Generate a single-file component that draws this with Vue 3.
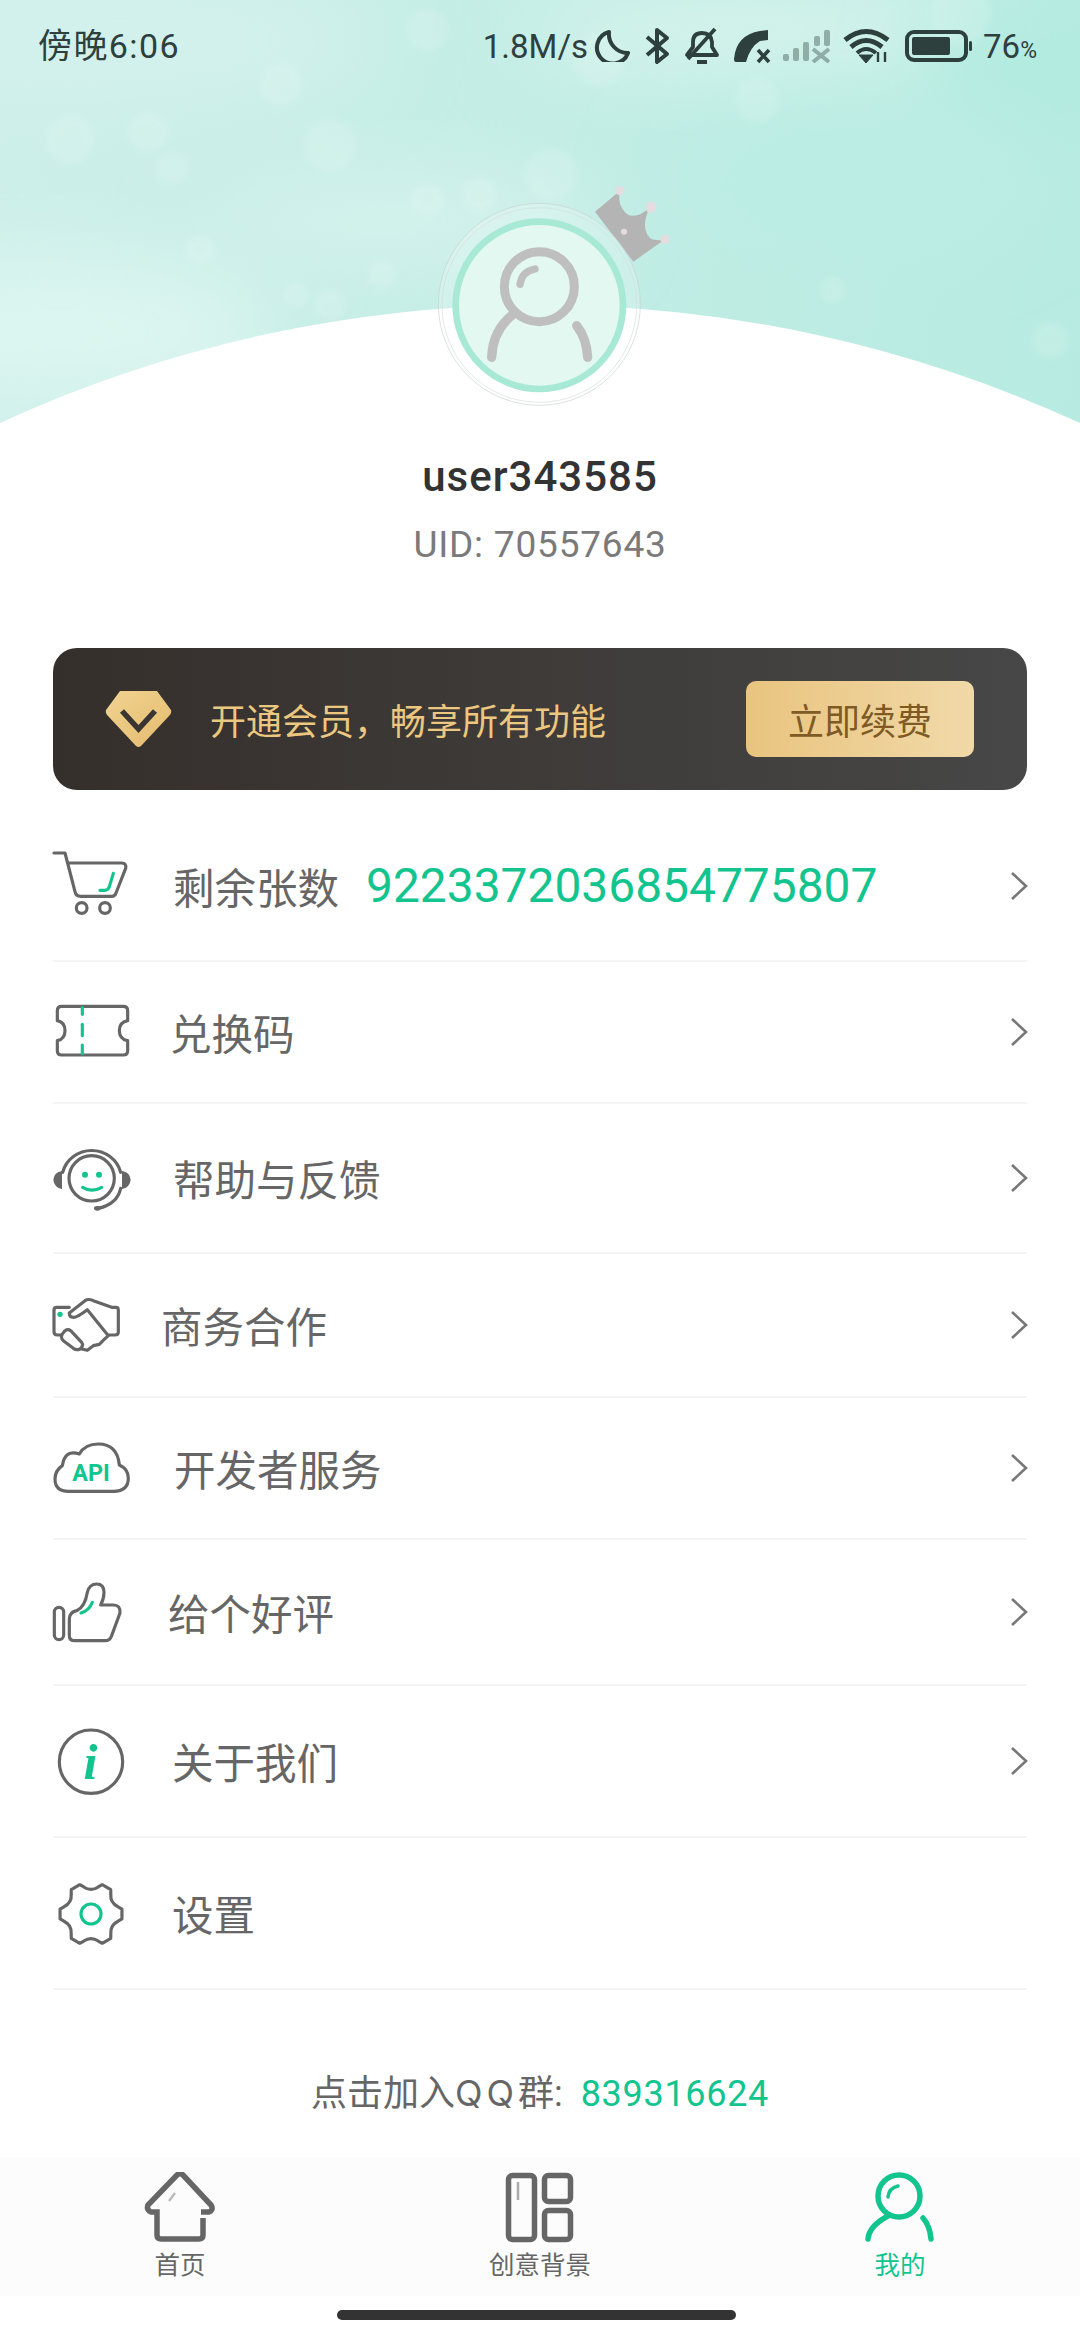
<script setup>
// gear outline, six teeth, in the same units as the other menu icons
function gearPath(cx, cy) {
  let d = ''
  for (let k = 0; k < 6; k++) {
    const a = (k * Math.PI) / 3
    const pt = (r, off) => {
      const t = a + (off * Math.PI) / 180
      return (cx + r * Math.cos(t)).toFixed(1) + ' ' + (cy + r * Math.sin(t)).toFixed(1)
    }
    d += (k === 0 ? 'M' : 'L') + pt(94, -9) + ' L' + pt(94, 9) + ' L' + pt(84, 15) + ' Q' + pt(66, 30) + ' ' + pt(84, 45) + ' L' + pt(94, 51) + ' '
  }
  return d + 'Z'
}

const bokeh = [
  [427, 30, 21], [281, 85, 21], [172, 168, 17], [148, 132, 20], [480, 194, 17], [427, 200, 16],
  [330, 145, 26], [551, 175, 26], [757, 100, 22], [1050, 340, 18], [960, 15, 30], [382, 275, 14],
  [833, 290, 13], [330, 305, 16], [296, 295, 12], [70, 140, 24], [600, 60, 26], [200, 250, 14]
]

const menu = [
  {
    name: '剩余张数', value: '9223372036854775807', height: 150, slot: 120, view: '69 51 240 180', arrow: true,
    gray: ['M72 42H105L135 158Q138 172 152 172H245Q255 172 258 162L287 88Q290 72 275 72H113', 'M139 207a16 16 0 1 0 32 0a16 16 0 1 0 -32 0', 'M209 207a16 16 0 1 0 32 0a16 16 0 1 0 -32 0'],
    green: ['M250 103L238 143Q235 154 224 154H210']
  },
  {
    name: '兑换码', height: 142, slot: 117, view: '69 489 240 180', arrow: true,
    gray: ['M95 502H280Q293 502 293 515V545Q268 550 268 575Q268 600 293 605V635Q293 648 280 648H95Q82 648 82 635V605Q105 600 105 575Q105 550 82 545V515Q82 502 95 502Z'],
    green: ['M157 506V526', 'M157 556V590', 'M157 618V644']
  },
  {
    name: '帮助与反馈', height: 150, slot: 120, view: '69 927 240 180', arrow: true,
    gray: ['M117 1018a68 68 0 1 0 136 0a68 68 0 1 0 -136 0', 'M98 1000A90 88 0 0 1 272 1000', 'M272 1048Q262 1095 205 1108'],
    fill: ['M96 996V1050Q72 1045 70 1022Q72 1000 96 996Z', 'M276 996V1050Q300 1045 302 1022Q300 1000 276 996Z', 'M192 1108a10 7 0 1 0 20 0a10 7 0 1 0 -20 0Z'],
    green: ['M158 1045Q185 1062 215 1045'],
    dots: [[165, 1007, 9], [207, 1007, 9]]
  },
  {
    name: '商务合作', height: 144, slot: 108, view: '69 168 240 180', arrow: true,
    gray: ['M118 205H80Q72 205 72 213V278Q72 287 82 288H92', 'M118 222Q118 235 130 235Q142 235 172 212L235 290L222 302L208 316L190 320L172 334L155 330', 'M118 222L165 185Q175 178 190 185L245 205H258Q265 205 265 213V280Q265 288 255 288H235', 'M97 285Q110 265 122 275L155 310Q162 320 150 330Q140 335 130 328L100 305Q90 295 97 285Z'],
    green: [],
    dots: [[90, 226, 8]]
  },
  {
    name: '开发者服务', height: 142, slot: 121, view: '69 597 240 180', arrow: true,
    gray: ['M115 757H250Q295 757 295 717Q295 690 268 678Q262 615 205 615Q165 615 148 645Q105 630 97 680Q75 695 75 720Q75 757 115 757Z'],
    green: [],
    label: { text: 'API', x: 183, y: 726, size: 70, family: 'Roboto', style: 'normal' }
  },
  {
    name: '给个好评', height: 146, slot: 115, view: '69 1029 240 180', arrow: true,
    gray: ['M87 1105a14 14 0 0 1 14 14V1188a14 14 0 0 1 -28 0V1119a14 14 0 0 1 14 -14Z', 'M118 1140Q118 1120 140 1115Q165 1105 172 1060Q178 1035 200 1035Q222 1035 222 1060Q222 1080 212 1098H250Q272 1098 270 1122L245 1190Q240 1205 225 1205H135Q118 1205 118 1190Z'],
    green: ['M153 1122Q178 1115 187 1090']
  },
  {
    name: '关于我们', height: 152, slot: 119, view: '69 96 240 180', arrow: true,
    gray: ['M88 188a95 95 0 1 0 190 0a95 95 0 1 0 -190 0'],
    green: [],
    label: { text: 'i', x: 181, y: 241, size: 150, family: 'Liberation Serif', style: 'italic' }
  },
  {
    name: '设置', height: 152, slot: 119, view: '69 552 240 180', arrow: false,
    gray: [gearPath(183, 645)],
    green: ['M153 645a30 30 0 1 0 60 0a30 30 0 1 0 -60 0']
  }
]

const tabs = [
  { name: '首页' },
  { name: '创意背景' },
  { name: '我的', active: true }
]
</script>

<template>
  <div class="page">
    <div class="hero">
      <svg class="hero-bg" viewBox="0 0 1080 424" preserveAspectRatio="none">
        <defs>
          <filter id="soft" x="-50%" y="-50%" width="200%" height="200%">
            <feGaussianBlur stdDeviation="40" />
          </filter>
          <filter id="dot" x="-30%" y="-30%" width="160%" height="160%">
            <feGaussianBlur stdDeviation="3" />
          </filter>
        </defs>
        <ellipse cx="120" cy="40" rx="260" ry="70" fill="#d3f1ec" filter="url(#soft)" />
        <ellipse cx="760" cy="30" rx="240" ry="50" fill="#d4f3ec" filter="url(#soft)" />
        <ellipse cx="60" cy="330" rx="220" ry="80" fill="#dcf5f0" filter="url(#soft)" />
        <ellipse cx="400" cy="220" rx="200" ry="50" fill="#d4f2ec" filter="url(#soft)" />
        <ellipse cx="1040" cy="70" rx="120" ry="60" fill="#b2ebe0" filter="url(#soft)" />
        <ellipse cx="850" cy="180" rx="190" ry="70" fill="#bcede4" filter="url(#soft)" />
        <circle v-for="(b, i) in bokeh" :key="i" :cx="b[0]" :cy="b[1]" :r="b[2]" fill="#fff" opacity="0.13" filter="url(#dot)" />
        <path d="M0 423A1294 1294 0 0 1 1080 423V424H0Z" fill="#fff" />
      </svg>

      <div class="status">
        <span class="clock">傍晚6:06</span>
        <div class="status-right">
          <span class="speed">1.8M/s</span>
          <svg class="moon" width="36" height="32" viewBox="0 0 36 32" fill="none" stroke="#2e403e" stroke-width="4" stroke-linejoin="round">
            <path d="M15 2A16 16 0 1 0 34 23A19 19 0 0 1 15 2Z" />
          </svg>
          <svg class="blue" width="26" height="38" viewBox="0 0 26 38" fill="none" stroke="#2e403e" stroke-width="4" stroke-linejoin="round">
            <path d="M3 10L23 27L13 35V3L23 11L3 28" />
          </svg>
          <svg class="bell" width="36" height="38" viewBox="0 0 36 38" fill="none" stroke="#2e403e" stroke-width="3.8" stroke-linejoin="round">
            <path d="M3 28H33L28 20V15Q27 6 18 6Q9 6 9 15V20Z" />
            <path d="M4 32L31 2" />
            <path d="M13 35H23" stroke-width="4" />
          </svg>
          <svg class="phone" width="38" height="36" viewBox="0 0 38 36" fill="none">
            <path d="M35 2V12L27 13Q17 19 13 34H3Q1 34 1 31Q3 7 27 3Z" fill="#2e403e" />
            <path d="M25 22L36 34M36 22L25 34" stroke="#2e403e" stroke-width="3.600" />
          </svg>
          <svg class="signal" width="50" height="34" viewBox="0 0 50 34" fill="#2e403e" opacity="0.38">
            <rect x="1" y="25" width="6" height="7" rx="2" />
            <rect x="11" y="19" width="6" height="13" rx="2" />
            <rect x="21" y="13" width="6" height="19" rx="2" />
            <rect x="32" y="7" width="6" height="10" rx="2" />
            <rect x="42" y="1" width="6" height="16" rx="2" />
            <path d="M31 20L47 33M47 20L31 33" stroke="#2e403e" stroke-width="4" fill="none" />
          </svg>
          <svg class="wifi" width="48" height="36" viewBox="0 0 48 36" fill="none" stroke="#2e403e" stroke-width="5">
            <path d="M2 12Q23 -5 45 12" />
            <path d="M8 19Q23 6 39 19" />
            <path d="M14 25Q23 17 33 25" stroke-width="4" />
            <path d="M16 27L23 35L30 27Z" fill="#2e403e" stroke-width="1" />
            <path d="M35 24V34M42 24V34" stroke-width="2.400" />
          </svg>
          <svg class="battery" width="68" height="32" viewBox="0 0 68 32" fill="none">
            <rect x="2" y="2" width="59" height="28" rx="7" stroke="#2e403e" stroke-width="4" />
            <rect x="7" y="7" width="38" height="18" rx="2" fill="#2e403e" />
            <rect x="64" y="11" width="3" height="10" rx="1.5" fill="#2e403e" />
          </svg>
          <span class="percent">76<small>%</small></span>
        </div>
      </div>

      <svg class="avatar" width="240" height="240" viewBox="0 0 720 720">
        <path d="M525 125L600 62Q590 110 625 135Q655 145 690 112Q660 170 690 205Q710 215 735 208L640 275Z" fill="#b4b4b4" />
        <circle cx="600" cy="62" r="14" fill="#e4dde0" />
        <circle cx="693" cy="112" r="17" fill="#e4dde0" />
        <circle cx="735" cy="208" r="14" fill="#e4dde0" />
        <circle cx="612" cy="185" r="9" fill="#e4dde0" />
        <circle cx="358" cy="403" r="303" fill="#fff" fill-opacity="0.2" stroke="#c9d2d0" stroke-width="2" />
        <circle cx="358" cy="405" r="292" fill="none" stroke="#d8dddc" stroke-width="2" />
        <circle cx="358" cy="406" r="251" fill="#e2f8f1" stroke="#a8e9d6" stroke-width="20" />
        <g fill="none" stroke="#bfbfbf" stroke-linecap="round">
          <circle cx="358" cy="350" r="105" stroke-width="27" />
          <path d="M300 343Q305 305 345 297" stroke-width="22" />
          <path d="M215 562Q218 480 280 432" stroke-width="28" />
          <path d="M470 467Q500 505 503 562" stroke-width="28" />
        </g>
      </svg>
    </div>

    <div class="name">user343585</div>
    <div class="uid">UID: 70557643</div>

    <div class="vip">
      <div class="vip-left">
        <svg width="67" height="58" viewBox="0 0 67 58">
          <defs>
            <linearGradient id="gold" x1="0" y1="0" x2="1" y2="1">
              <stop offset="0" stop-color="#f0d391" />
              <stop offset="1" stop-color="#e5bb6e" />
            </linearGradient>
          </defs>
          <path d="M15 1H52L66 20Q67 23 64 26L36 56Q33.500 58 31 56L3 26Q0 23 1 20Z" fill="url(#gold)" />
          <path d="M17 21L33.500 39L50 21" fill="none" stroke="#3a3532" stroke-width="5.500" />
        </svg>
        <span>开通会员，畅享所有功能</span>
      </div>
      <div class="vip-btn">立即续费</div>
    </div>

    <div class="menu">
      <div v-for="item in menu" :key="item.name" class="row" :style="{ height: item.height + 'px' }">
        <div class="row-icon" :style="{ width: item.slot + 'px' }">
          <svg width="80" height="60" :viewBox="item.view">
            <path v-for="d in item.gray" :key="d" :d="d" class="ic-gray" />
            <path v-for="d in item.fill" :key="d" :d="d" fill="#666" />
            <path v-for="d in item.green" :key="d" :d="d" class="ic-green" />
            <circle v-for="c in item.dots" :key="c[0]" :cx="c[0]" :cy="c[1]" :r="c[2]" fill="#12c48e" />
            <text
              v-if="item.label"
              :x="item.label.x"
              :y="item.label.y"
              :font-size="item.label.size"
              :font-family="item.label.family"
              :font-style="item.label.style"
              font-weight="700"
              text-anchor="middle"
              fill="#12c48e"
            >{{ item.label.text }}</text>
          </svg>
        </div>
        <span class="row-name">{{ item.name }}</span>
        <span v-if="item.value" class="row-value">{{ item.value }}</span>
        <svg v-if="item.arrow" class="arrow" width="20" height="30" viewBox="0 0 20 30" fill="none" stroke="#777" stroke-width="2.600">
          <path d="M3 2L17 15L3 28" />
        </svg>
      </div>
    </div>

    <div class="qq">点击加入<span class="qq-q">QQ</span>群: <span class="qq-num">839316624</span></div>

    <div class="tabbar">
      <div v-for="(tab, i) in tabs" :key="tab.name" class="tab" :class="{ active: tab.active }">
        <svg width="80" height="72" viewBox="0 0 80 72" fill="none" stroke-width="5.500">
          <g v-if="i === 0" stroke="#666">
            <path d="M63 46V63Q63 67 59 67H21Q17 67 17 63V40H11Q6 38 8 33L37 3Q40 0 43 3L71 33Q74 38 69 40H61" />
            <path d="M35 21L29 29" stroke="#bbb" stroke-width="2.500" />
          </g>
          <g v-else-if="i === 1" stroke="#666">
            <rect x="8.500" y="3.500" width="26" height="64" rx="4" />
            <rect x="44.500" y="3.500" width="26" height="26" rx="4" />
            <rect x="44.500" y="38.500" width="26" height="29" rx="4" />
            <path d="M18 10V28" stroke="#aaa" stroke-width="2.500" />
          </g>
          <g v-else stroke="#12c48e" stroke-linecap="round">
            <circle cx="39" cy="24" r="21" />
            <path d="M28 25Q29 16 38 14" stroke-width="3.500" />
            <path d="M8 67Q9 54 28 44" />
            <path d="M63 46Q70 54 71 67" />
          </g>
        </svg>
        <span>{{ tab.name }}</span>
      </div>
    </div>
    <div class="home-bar"></div>
  </div>
</template>

<style scoped>
.page {
  width: 1080px;
  height: 2340px;
  background: #fff;
  overflow: hidden;
  font-family: Roboto, "Noto Sans CJK SC", sans-serif;
  color: #666;
}

.hero {
  position: relative;
  height: 424px;
  display: flex;
  flex-direction: column;
  align-items: center;
  background: linear-gradient(100deg, #cdefe9 0%, #c2ede5 50%, #b7ebe1 100%);
}

.hero-bg {
  position: absolute;
  left: 0;
  top: 0;
  width: 1080px;
  height: 424px;
}

.status {
  position: relative;
  width: 100%;
  height: 92px;
  box-sizing: border-box;
  padding: 0 43px 0 38px;
  display: flex;
  align-items: center;
  justify-content: space-between;
  font-size: 33px;
  color: #2e403e;
}

.clock {
  font-size: 34px;
  letter-spacing: 1.4px;
  margin-bottom: 5px;
}

.status-right {
  display: flex;
  align-items: center;
}

.moon { margin-left: 6px; }
.blue { margin-left: 14px; }
.bell { margin-left: 14px; }
.phone { margin-left: 13px; }
.signal { margin-left: 11px; }
.wifi { margin-left: 11px; }
.battery { margin-left: 14px; }

.percent {
  margin-left: 10px;
}

.percent small {
  font-size: 23px;
}

.avatar {
  position: relative;
  margin-top: 78px;
  overflow: visible;
}

.name {
  margin-top: 23px;
  text-align: center;
  font-size: 42px;
  line-height: 60px;
  font-weight: 500;
  color: #333;
  letter-spacing: 1px;
}

.uid {
  margin-top: 8px;
  text-align: center;
  font-size: 37px;
  line-height: 60px;
  color: #7a7a7a;
  letter-spacing: 0.8px;
}

.vip {
  margin: 73px 53px 0;
  height: 142px;
  box-sizing: border-box;
  padding: 0 53px 0 52px;
  border-radius: 24px;
  background: linear-gradient(90deg, #352f2b, #474747);
  display: flex;
  align-items: center;
  justify-content: space-between;
}

.vip-left {
  display: flex;
  align-items: center;
  gap: 38px;
  font-size: 36px;
  color: #ecc77f;
}

.vip-btn {
  width: 228px;
  height: 76px;
  border-radius: 10px;
  background: linear-gradient(90deg, #e9c47f, #f1d9a8);
  display: flex;
  align-items: center;
  justify-content: center;
  font-size: 36px;
  color: #7f5a25;
}

.menu {
  margin: 22px 53px 0;
}

.row {
  display: flex;
  align-items: center;
  box-sizing: border-box;
  border-bottom: 2px solid #f4f4f4;
}

.row-icon {
  flex: none;
  display: flex;
  align-items: center;
}

.row-icon svg {
  overflow: visible;
}

.ic-gray {
  fill: none;
  stroke: #666;
  stroke-width: 9.5;
  stroke-linejoin: round;
  stroke-linecap: round;
}

.ic-green {
  fill: none;
  stroke: #12c48e;
  stroke-width: 9.5;
  stroke-linecap: round;
}

.row-name {
  font-size: 41.5px;
  color: #666;
}

.row-value {
  margin-left: 27px;
  font-size: 47.9px;
  color: #12c48e;
}

.arrow {
  margin-left: auto;
  margin-right: -2px;
}

.qq {
  margin-top: 78px;
  height: 50px;
  line-height: 50px;
  text-align: center;
  font-size: 36px;
  color: #666;
}

.qq-q {
  font-family: Inter, sans-serif;
  letter-spacing: 4px;
}

.qq-num {
  margin-left: 9px;
  color: #12c48e;
  letter-spacing: 0.7px;
}

.tabbar {
  margin-top: 39px;
  height: 139px;
  box-sizing: border-box;
  padding-top: 15px;
  background: #fcfcfc;
  display: grid;
  grid-template-columns: repeat(3, 1fr);
}

.tab {
  display: flex;
  flex-direction: column;
  align-items: center;
  font-size: 25.5px;
  line-height: 36px;
  color: #666;
}

.tab span {
  margin-top: 3px;
}

.tab.active {
  color: #12c48e;
}

.home-bar {
  width: 399px;
  height: 10px;
  margin: 14px 0 0 337px;
  border-radius: 5px;
  background: #333;
}
</style>

<style>
html, body {
  margin: 0;
  background: #fff;
}
</style>
